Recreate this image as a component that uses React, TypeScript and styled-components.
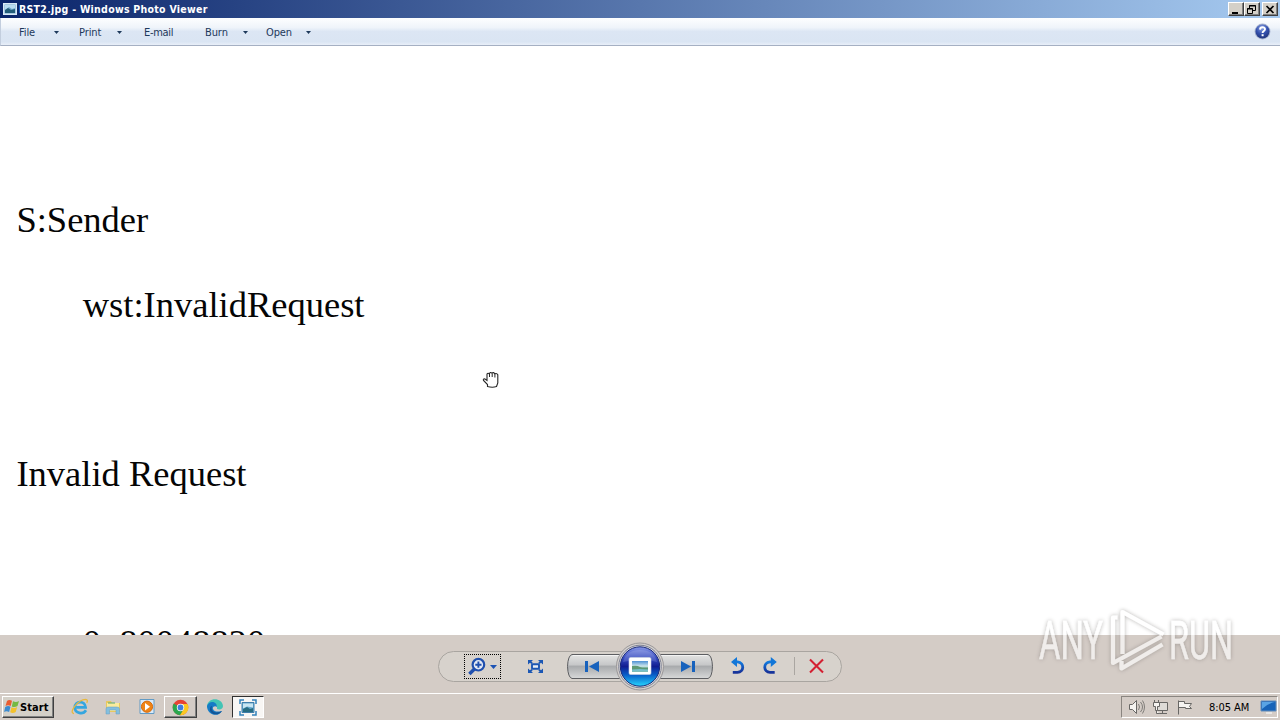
import React from "react";
import styled, { createGlobalStyle, css } from "styled-components";

const Global = createGlobalStyle`
  * { box-sizing: border-box; }
  html, body { margin: 0; padding: 0; overflow: hidden; }
  body { font-family: "DejaVu Sans Condensed", "DejaVu Sans", sans-serif; font-size: 11px; }
  svg { display: block; flex: none; }
`;

const Desktop = styled.div`
  width: 1280px;
  height: 720px;
  display: flex;
  flex-direction: column;
  position: relative;
  overflow: hidden;
  background: #d4ccc6;
`;

const TitleBar = styled.header`
  height: 18px;
  flex: none;
  display: flex;
  align-items: center;
  padding: 0 2px 0 3px;
  background: linear-gradient(90deg, #0a246a 0%, #a6caf0 100%);
`;

const Title = styled.span<{ $spacing: number }>`
  flex: 1;
  margin-left: 2px;
  color: #fff;
  font-family: "DejaVu Sans", sans-serif;
  font-stretch: condensed;
  font-weight: bold;
  font-size: 10.5px;
  line-height: 18px;
  letter-spacing: ${(p) => p.$spacing}px;
  white-space: nowrap;
`;

const CaptionButton = styled.button<{ $gap?: boolean }>`
  width: 16px;
  height: 14px;
  padding: 0;
  margin-left: ${(p) => (p.$gap ? 2 : 0)}px;
  border: 1px solid;
  border-color: #fff #404040 #404040 #fff;
  box-shadow: inset -1px -1px #808080;
  background: #d4d0c8;
`;

const MenuBar = styled.nav`
  height: 28px;
  flex: none;
  display: flex;
  align-items: center;
  border-left: 1px solid #c3cede;
  border-bottom: 1px solid #a5b0c3;
  background: linear-gradient(#fdfeff 0, #eff4fa 35%, #dce6f4 50%, #dae5f3 88%, #e9eff8 100%);
`;

const MenuItem = styled.div<{ $left: number; $width: number; $spacing?: number }>`
  display: flex;
  align-items: center;
  margin-left: ${(p) => p.$left}px;
  width: ${(p) => p.$width}px;
  padding-top: 1px;
  color: #1e395b;
  line-height: 27px;
  letter-spacing: ${(p) => p.$spacing ?? -0.1}px;
  white-space: nowrap;
  svg { margin-left: auto; }
`;

const Help = styled.div`
  margin-left: auto;
  padding-right: 9px;
`;

const Photo = styled.main`
  height: 589px;
  flex: none;
  overflow: hidden;
  padding: 153.2px 0 0 16.4px;
  background: #fff;
`;

const Line = styled.p<{ $indent?: boolean }>`
  margin: 0;
  height: 42.25px;
  padding-left: ${(p) => (p.$indent ? 66.3 : 0)}px;
  font-family: "Liberation Serif", serif;
  font-size: 36.5px;
  line-height: 42.25px;
  color: #050505;
  white-space: pre;
`;

const Controls = styled.section`
  height: 58px;
  flex: none;
  display: flex;
  justify-content: center;
  padding-top: 5px;
  background: #d4ccc6;
`;

const TaskBar = styled.footer`
  height: 27px;
  flex: none;
  display: flex;
  align-items: center;
  padding: 0 2px;
  border-top: 1px solid #fff;
  background: #d4ccc6;
`;

const raised = css`
  border: 1px solid;
  border-color: #fff #404040 #404040 #fff;
  box-shadow: inset -1px -1px #808080;
`;

const StartButton = styled.button`
  ${raised}
  width: 52px;
  height: 22px;
  display: flex;
  align-items: center;
  padding: 0 0 0 1px;
  background: #d4d0c8;
  color: #000;
  font-family: "DejaVu Sans", sans-serif;
  font-stretch: condensed;
  font-weight: bold;
  font-size: 11px;
  letter-spacing: 0.1px;
`;

const TaskIcon = styled.div<{ $width: number; $look?: "raised" | "pressed" }>`
  width: ${(p) => p.$width}px;
  height: 22px;
  display: flex;
  align-items: center;
  justify-content: center;
  ${(p) => p.$look === "raised" && raised}
  ${(p) =>
    p.$look === "pressed" &&
    css`
      border: 1px solid;
      border-color: #303030 #fff #fff #303030;
      background: #f8f6f4;
    `}
`;

const Launchers = styled.div`
  display: flex;
  margin-left: 9px;
`;

const Tray = styled.div`
  width: 157px;
  height: 22px;
  margin-left: auto;
  display: flex;
  align-items: center;
  padding-left: 6px;
  border: 1px solid;
  border-color: #8a8580 #fff #fff #8a8580;
`;

const Clock = styled.span`
  margin: 0 0 0 15px;
  width: 51px;
  color: #000;
  letter-spacing: -0.05px;
  white-space: nowrap;
`;

const Pointer = styled.div`
  position: absolute;
  left: 482px;
  top: 371px;
`;

const Watermark = styled.div`
  position: absolute;
  left: 1030px;
  top: 600px;
`;

const Arrow = () => (
  <svg width="5" height="3" viewBox="0 0 5 3"><path d="M0 0h5L2.5 3z" fill="#1e395b" /></svg>
);

const PhotoIcon = () => (
  <svg width="14" height="14" viewBox="0 0 14 14">
    <path d="M0 1h14v12H0z" fill="#d9e9f5" />
    <path d="M1.5 2.5h11v9h-11z" fill="#74a9cc" />
    <path d="M2 3h10v3L9 7 6 5 2 8z" fill="#b9dcf0" />
    <path d="M2 11V8l3-2 3 2 4-1v4z" fill="#235d79" />
  </svg>
);

const HelpIcon = () => (
  <svg width="17" height="17" viewBox="0 0 17 17">
    <defs>
      <radialGradient id="help" cx=".45" cy=".25" r=".75">
        <stop offset="0" stopColor="#8da5e6" /><stop offset=".55" stopColor="#3350ad" /><stop offset="1" stopColor="#20347c" />
      </radialGradient>
    </defs>
    <circle cx="8.5" cy="8.5" r="7.9" fill="#a7b3cf" />
    <circle cx="8.5" cy="8.5" r="7" fill="url(#help)" />
    <path d="M6 6.6c.1-3.3 5.2-3 5-.3-.1 1.7-2.4 1.7-2.4 3.6" fill="none" stroke="#fff" strokeWidth="1.9" />
    <path d="M7.6 11.2h2v2h-2z" fill="#fff" />
  </svg>
);

const Navigation = () => (
  <svg width="406" height="52" viewBox="437 640 406 52">
    <defs>
      <linearGradient id="silver" x1="0" y1="0" x2="0" y2="1">
        <stop offset="0" stopColor="#e4e4e3" /><stop offset=".42" stopColor="#c7c8c9" />
        <stop offset=".5" stopColor="#a9abad" /><stop offset="1" stopColor="#d8d9d9" />
      </linearGradient>
      <linearGradient id="orb" x1="0" y1="0" x2="0" y2="1">
        <stop offset="0" stopColor="#8797e6" /><stop offset=".3" stopColor="#3247be" />
        <stop offset=".5" stopColor="#101d91" /><stop offset=".7" stopColor="#075ac6" /><stop offset="1" stopColor="#25d6ff" />
      </linearGradient>
      <linearGradient id="blue" x1="0" y1="0" x2="0" y2="1">
        <stop offset="0" stopColor="#117be0" /><stop offset="1" stopColor="#17339a" />
      </linearGradient>
      <linearGradient id="scene" x1="0" y1="0" x2="0" y2="1">
        <stop offset="0" stopColor="#4d91d5" /><stop offset=".5" stopColor="#d1e8ec" /><stop offset=".7" stopColor="#4d9271" /><stop offset="1" stopColor="#69b8ba" />
      </linearGradient>
    </defs>
    <rect x="438.5" y="651.5" width="403" height="30" rx="15" fill="#d7d2cc" stroke="#a9a5a0" />
    <path d="M464 654.5h37M464 678.5h37M464.5 654v25M500.500 654v25" fill="none" stroke="#000" strokeDasharray="1 1" />
    <g fill="none" stroke="#1f4fae">
      <circle cx="478.4" cy="664.7" r="5.8" strokeWidth="2.2" fill="#e3e9f4" />
      <path d="M474.400 669l-5 5" strokeWidth="3.400" />
      <path d="M475.300 664.700h6.200M478.400 661.600v6.200" strokeWidth="1.900" />
    </g>
    <path d="M490 665h7l-3.500 4z" fill="#1c53b4" />
    <g fill="#1b57b4">
      <path d="M528 660h5l-1.600 1.600 1.300 1.200-1.300 1.300-1.400-1.400-2 1.800zM543 660h-5l1.600 1.600-1.300 1.200 1.300 1.300 1.400-1.400 2 1.800zM528 673h5l-1.600-1.600 1.300-1.200-1.300-1.300-1.400 1.400-2-1.800zM543 673h-5l1.600-1.600-1.300-1.200 1.300-1.300 1.400 1.400 2-1.800z" />
      <rect x="532" y="664.300" width="7" height="4.500" rx=".5" fill="#e9eef5" stroke="#1b57b4" strokeWidth="1.900" />
    </g>
    <path d="M572 654.5h136q4 1 4.500 12q-.5 11-4.500 12H572q-4-1-4.500-12q.5-11 4.500-12z" fill="url(#silver)" stroke="#5d5e61" />
    <path d="M573 655.500h134" stroke="#f3f3f3" />
    <circle cx="640" cy="666.500" r="23.500" fill="#d4d0cc" stroke="#99979a" />
    <circle cx="640" cy="666.500" r="21.300" fill="#e4e2e0" stroke="#7c8094" />
    <circle cx="640" cy="666.500" r="19.700" fill="url(#orb)" stroke="#182978" />
    <path d="M623 662q3-12 17-12t17 12q-15-5-34 0z" fill="#fff" opacity=".15" />
    <rect x="629" y="657.500" width="22" height="17" rx="1.500" fill="#fff" stroke="#ccd4df" strokeWidth=".6" />
    <rect x="632" y="661" width="16" height="10.500" fill="url(#scene)" />
    <path d="M632 666q5-1 8 1t8 1v3.500h-16z" fill="#5e9975" />
    <path d="M632 669.500q8-1 16 0v2h-16z" fill="#77bfca" />
    <g fill="#1762bd">
      <path d="M585 661h3v11h-3zM599 661v11l-10-5.500z" />
      <path d="M692 661h3v11h-3zM681 661v11l10-5.500z" />
    </g>
    <g fill="none" stroke="url(#blue)" strokeWidth="2.800">
      <path d="M735 661.800h2.500c7.500 1 6.500 10.500 0 10.500h-4.700" />
      <path d="M772.500 661.800H770c-7.500 1-6.500 10.500 0 10.500h4.700" />
    </g>
    <path d="M731 662l6-5v10zM776.800 662l-6-5v10z" fill="#1277d8" />
    <path d="M794.500 657v18" stroke="#aaa6a1" />
    <path d="M810 659.500l13 13M823 659.500l-13 13" stroke="#d41f31" strokeWidth="2.100" />
  </svg>
);

const WindowsLogo = () => (
  <svg width="16" height="16" viewBox="0 0 16 16">
    <path d="M3 2q2-2 5-.2L6.700 7Q4 5.500 1.500 7z" fill="#e95d32" />
    <path d="M9 2.300q3 1.600 6-.2L13.500 7q-3 2-5.700.4z" fill="#76b943" />
    <path d="M1.200 8q3-1.700 5.300-.2L5.100 13q-2.700-1.700-5 0z" fill="#3c8bd0" />
    <path d="M7.500 8.300q3 1.600 5.700-.2L11.700 13q-2.800 2-5.500.3z" fill="#f3c12c" />
  </svg>
);

const IeIcon = () => (
  <svg width="18" height="18" viewBox="0 0 18 18">
    <path d="M15 12.200C12 17 4 15.500 3.800 9.500 3.800 2.500 14 2 14.600 9.300H5.300" fill="none" stroke="#35a6df" strokeWidth="2.700" />
    <path d="M3 15.500C-3 15 7 1.500 14.500 1.300c2.500 0 2 2.200 1.200 3.600" fill="none" stroke="#e8b83c" strokeWidth="1.300" />
  </svg>
);

const FolderIcon = () => (
  <svg width="18" height="18" viewBox="0 0 18 18">
    <path d="M2 3h5l1 2h8v9H2z" fill="#e8c85f" />
    <path d="M3 5h12v8H3z" fill="#faeb9d" />
    <path d="M4 5h7" stroke="#58aa72" />
    <path d="M2 16v-5q0-2 2-2h9q2.500 0 2.500 2v5H12v-4H5.500v4z" fill="#83bfdf" stroke="#669dc2" strokeWidth=".5" />
  </svg>
);

const MediaIcon = () => (
  <svg width="18" height="18" viewBox="0 0 18 18">
    <path d="M2 1.500h14v14H2z" fill="#d8eafa" stroke="#629bc5" />
    <circle cx="9" cy="8.700" r="5.600" fill="#ef8416" stroke="#d56c13" />
    <path d="M7 5l5 3.700-5 3.700z" fill="#fff" />
  </svg>
);

const ChromeIcon = () => (
  <svg width="17" height="17" viewBox="0 0 17 17">
    <circle cx="8.500" cy="8.500" r="7.800" fill="#e64334" />
    <path d="M8.500 8.500L1.700 4.600A7.800 7.800 0 0 0 8 16.300L12 10z" fill="#2ba64d" />
    <path d="M8.500 5h7a7.800 7.800 0 0 1-7.500 11.300l3.700-6z" fill="#fbc921" />
    <circle cx="8.500" cy="8.500" r="3.700" fill="#fff" /><circle cx="8.500" cy="8.500" r="2.900" fill="#3f7ddd" />
  </svg>
);

const EdgeIcon = () => (
  <svg width="18" height="18" viewBox="0 0 18 18">
    <path d="M1 9C1-1 16-1 17 8c0 3-3 4-6 3 1-6-6-6-7 0z" fill="#43c4b5" />
    <path d="M1 8c2-6 10-5 10 1-2-2-5 0-4 2 1 3 5 3 9 2-4 7-15 4-15-5z" fill="#167bc6" />
    <path d="M6 8c-2 6 4 8 10 5-4 6-13 3-12-2 0-2 1-3 2-3z" fill="#145596" />
  </svg>
);

const ViewerIcon = () => (
  <svg width="18" height="17" viewBox="0 0 18 17">
    <path d="M3 3.500h12v10H3z" fill="#65a8cf" stroke="#417eaa" />
    <path d="M4 4.500h10v4L8 7.500l-4 2z" fill="#c9e6f2" />
    <path d="M4 13v-3l4-2 3 2 3-1v4z" fill="#286d82" />
    <path d="M1 5V1h4M13 1h4v4M1 12v4h4M13 16h4v-4" fill="none" stroke="#3382bb" strokeWidth="1.500" />
  </svg>
);

const TrayIcons = () => (
  <svg width="66" height="18" viewBox="0 0 66 18">
    <g fill="#f5f3f0" stroke="#686765">
      <path d="M1.500 6.500h3l4-4v13l-4-4h-3z" />
      <path d="M10.500 6q2 3 0 6M12.500 4q4 5 0 10M14.500 2.500q4 6.500 0 13" fill="none" strokeWidth=".8" />
      <path d="M29.500 4.500h10v8h-10z" fill="#dedbd7" />
      <path d="M30 15.500h9M34.500 12.500v3" />
      <path d="M25.500 4.500h6v4h-2v4h-2v-4h-2zM26.500 2v2.500M30.500 2v2.500M28.500 12.500v3h3" />
      <path d="M50.500 2.500v14M50.500 3.500h6v2h7l-2 3 2 2h-6v-1h-7z" />
    </g>
  </svg>
);

const DesktopIcon = () => (
  <svg width="17" height="16" viewBox="0 0 17 16">
    <path d="M1 2h15v10H1z" fill="#1763b8" stroke="#658ebb" />
    <path d="M2 3h13q-7 1-13 7z" fill="#59a4e5" />
    <path d="M6 14h6" stroke="#e8e6e4" strokeWidth="2" />
  </svg>
);

const HandIcon = () => (
  <svg width="18" height="18" viewBox="0 0 18 18">
    <path d="M5.500 15.500v-2l-4-4q-.7-2 1.500-1.500l2 1.500V3q1-1.500 2.500 0 .5-2.500 2.500-.8 1.500-1.500 2.800.6 2-1 3 .9V12l-1.300 3.500q-4 1.500-9 0z" fill="#fff" stroke="#252525" strokeWidth="1.100" />
    <path d="M7.500 3v3M10.200 2.500V6M12.900 3v3.500" stroke="#252525" strokeWidth="1" />
  </svg>
);

const Brand = () => (
  <svg width="220" height="80" viewBox="1030 600 220 80">
    <defs>
      <filter id="halo" x="-10%" y="-15%" width="120%" height="130%">
        <feDropShadow dx="0" dy="0" stdDeviation="2" floodColor="#6a6764" floodOpacity=".75" />
      </filter>
    </defs>
    <g filter="url(#halo)" fill="#fff" stroke="#fff" opacity=".66" fontFamily="Roboto, sans-serif" fontWeight="400" fontSize="53">
      <text x="1039" y="658.500" textLength="64" lengthAdjust="spacingAndGlyphs" strokeWidth=".5">ANY</text>
      <text x="1169" y="658.500" textLength="64" lengthAdjust="spacingAndGlyphs" strokeWidth=".5">RUN</text>
      <g fill="none" strokeWidth="4.200" strokeLinejoin="round">
        <path d="M1122.500 654v-42l41 22.500" />
        <path d="M1117.500 617.500h-4.500v45.500l48.500-26.500" />
        <path d="M1121.500 661v7.500l41-24" />
      </g>
    </g>
  </svg>
);

export default function App() {
  return (
    <Desktop>
      <Global />
      <TitleBar>
        <PhotoIcon />
        <Title $spacing={0.27}>RST2.jpg - Windows Photo Viewer</Title>
        <CaptionButton><svg width="13" height="11"><path d="M3 8h6v2H3z" /></svg></CaptionButton>
        <CaptionButton>
          <svg width="13" height="11"><path d="M4.500 4V1.500h6v5H8M4 2h7M2.500 4.500h5v5h-5zM2 5h6" fill="none" stroke="#000" /></svg>
        </CaptionButton>
        <CaptionButton $gap>
          <svg width="13" height="11"><path d="M3.500 2l7 7M10.500 2l-7 7" stroke="#000" strokeWidth="1.700" /></svg>
        </CaptionButton>
      </TitleBar>
      <MenuBar>
        <MenuItem $left={18} $width={40}>File<Arrow /></MenuItem>
        <MenuItem $left={20} $width={43}>Print<Arrow /></MenuItem>
        <MenuItem $left={22} $width={30} $spacing={-0.3}>E-mail</MenuItem>
        <MenuItem $left={31} $width={43}>Burn<Arrow /></MenuItem>
        <MenuItem $left={18} $width={45}>Open<Arrow /></MenuItem>
        <Help><HelpIcon /></Help>
      </MenuBar>
      <Photo>
        <Line>S:Sender</Line>
        <Line />
        <Line $indent>wst:InvalidRequest</Line>
        <Line />
        <Line />
        <Line />
        <Line>Invalid Request</Line>
        <Line />
        <Line />
        <Line />
        <Line $indent>0x80048820</Line>
      </Photo>
      <Controls><Navigation /></Controls>
      <TaskBar>
        <StartButton><WindowsLogo />Start</StartButton>
        <Launchers>
          <TaskIcon $width={33}><IeIcon /></TaskIcon>
          <TaskIcon $width={34}><FolderIcon /></TaskIcon>
          <TaskIcon $width={34}><MediaIcon /></TaskIcon>
          <TaskIcon $width={33} $look="raised"><ChromeIcon /></TaskIcon>
          <TaskIcon $width={35}><EdgeIcon /></TaskIcon>
          <TaskIcon $width={32} $look="pressed"><ViewerIcon /></TaskIcon>
        </Launchers>
        <Tray>
          <TrayIcons />
          <Clock>8:05 AM</Clock>
          <DesktopIcon />
        </Tray>
      </TaskBar>
      <Pointer><HandIcon /></Pointer>
      <Watermark><Brand /></Watermark>
    </Desktop>
  );
}
